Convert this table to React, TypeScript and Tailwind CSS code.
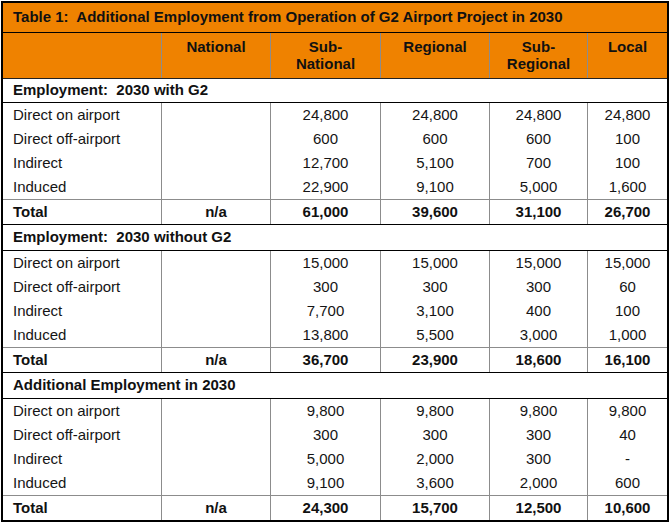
import React from "react";

const cols = "grid grid-cols-[158px_109px_110px_109px_98px_80px]";
const vline = "border-l border-[#8c8c8c]";

type Group = {
  title: string;
  rows: [string, string, string, string, string][];
  total: [string, string, string, string, string];
  sectionH: string;
};

const groups: Group[] = [
  {
    title: "Employment:  2030 with G2",
    sectionH: "h-[24px]",
    rows: [
      ["Direct on airport", "24,800", "24,800", "24,800", "24,800"],
      ["Direct off-airport", "600", "600", "600", "100"],
      ["Indirect", "12,700", "5,100", "700", "100"],
      ["Induced", "22,900", "9,100", "5,000", "1,600"],
    ],
    total: ["n/a", "61,000", "39,600", "31,100", "26,700"],
  },
  {
    title: "Employment:  2030 without G2",
    sectionH: "h-[26px]",
    rows: [
      ["Direct on airport", "15,000", "15,000", "15,000", "15,000"],
      ["Direct off-airport", "300", "300", "300", "60"],
      ["Indirect", "7,700", "3,100", "400", "100"],
      ["Induced", "13,800", "5,500", "3,000", "1,000"],
    ],
    total: ["n/a", "36,700", "23,900", "18,600", "16,100"],
  },
  {
    title: "Additional Employment in 2030",
    sectionH: "h-[26px]",
    rows: [
      ["Direct on airport", "9,800", "9,800", "9,800", "9,800"],
      ["Direct off-airport", "300", "300", "300", "40"],
      ["Indirect", "5,000", "2,000", "300", "-"],
      ["Induced", "9,100", "3,600", "2,000", "600"],
    ],
    total: ["n/a", "24,300", "15,700", "12,500", "10,600"],
  },
];

export default function App() {
  return (
    <div className="bg-white w-[672px] h-[523px] pt-[1px] pl-[1px]" style={{ fontFamily: '"Liberation Sans", Arial, sans-serif' }}>
      <div className="w-[668px] border-2 border-black text-[15px] text-[#151515]">
        <div className="h-[30px] bg-[#EF8200] border-b border-black flex items-center pl-[10px] font-bold text-[15px] text-[#111] whitespace-pre">
          Table 1:  Additional Employment from Operation of G2 Airport Project in 2030
        </div>
        <div className={`${cols} h-[46px] bg-[#EF8200] border-b border-[#222] font-bold leading-[17px] text-[#111]`}>
          <div />
          <div className={`${vline} text-center pt-[5px]`}>National</div>
          <div className={`${vline} text-center pt-[5px]`}>Sub-<br />National</div>
          <div className={`${vline} text-center pt-[5px]`}>Regional</div>
          <div className={`${vline} text-center pt-[5px]`}>Sub-<br />Regional</div>
          <div className={`${vline} text-center pt-[5px]`}>Local</div>
        </div>
        {groups.map((g, gi) => (
          <div key={gi}>
            <div className={`${g.sectionH} border-b border-black flex items-center pl-[10px] font-bold text-[#111] whitespace-pre`}>{g.title}</div>
            {g.rows.map((r, ri) => (
              <div
                key={ri}
                className={`${cols} ${ri === 3 ? "h-[25px] border-b border-[#8c8c8c]" : "h-[24px]"}`}
              >
                <div className="flex items-center pl-[10px]">{r[0]}</div>
                <div className={vline} />
                {r.slice(1).map((v, vi) => (
                  <div key={vi} className={`${vline} flex items-center justify-center`}>{v}</div>
                ))}
              </div>
            ))}
            <div className={`${cols} ${gi < 2 ? "h-[25px] border-b border-black" : "h-[24px]"} font-bold text-[#111]`}>
              <div className="flex items-center pl-[10px]">Total</div>
              {g.total.map((v, vi) => (
                <div key={vi} className={`${vline} flex items-center justify-center`}>{v}</div>
              ))}
            </div>
          </div>
        ))}
      </div>
    </div>
  );
}
